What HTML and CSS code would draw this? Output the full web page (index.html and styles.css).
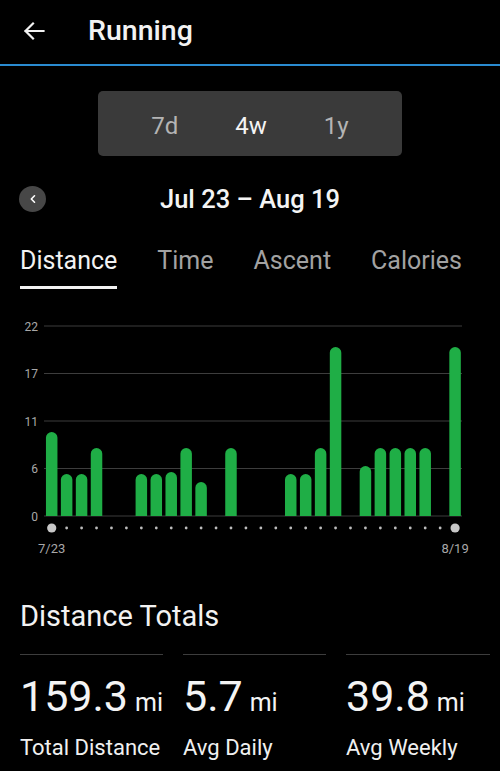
FILE: index.html
```html
<!DOCTYPE html>
<html lang="en">
<head>
<meta charset="utf-8">
<title>Running</title>
<link rel="stylesheet" href="styles.css">
</head>
<body>
<header class="topbar">
  <svg class="back" width="24" height="24" viewBox="0 0 24 24" aria-hidden="true">
    <path d="M21.5 12H3.5M11 4.5L3.5 12L11 19.5" fill="none" stroke="#f2f2f2" stroke-width="2.2" stroke-linecap="square"/>
  </svg>
  <h1 class="title">Running</h1>
</header>

<div class="range-wrap">
  <div class="range">
    <span class="range-item">7d</span>
    <span class="range-item active">4w</span>
    <span class="range-item">1y</span>
  </div>
</div>

<div class="daterow">
  <span class="prev">
    <svg width="10" height="10" viewBox="0 0 10 10" aria-hidden="true">
      <path d="M6.5 1.8L3.3 5L6.5 8.2" fill="none" stroke="#fff" stroke-width="1.6" stroke-linecap="round" stroke-linejoin="round"/>
    </svg>
  </span>
  <div class="dates">Jul 23 – Aug 19</div>
  <span></span>
</div>

<nav class="tabs">
  <span class="tab active">Distance</span>
  <span class="tab">Time</span>
  <span class="tab">Ascent</span>
  <span class="tab">Calories</span>
</nav>

<svg class="chart" width="500" height="260" viewBox="0 0 500 260">
  <defs>
    <clipPath id="plot"><rect x="0" y="0" width="500" height="216"/></clipPath>
  </defs>
  <g class="grid">
    <line x1="44" y1="26" x2="462" y2="26"/>
    <line x1="44" y1="73.5" x2="462" y2="73.5"/>
    <line x1="44" y1="121" x2="462" y2="121"/>
    <line x1="44" y1="168.5" x2="462" y2="168.5"/>
    <line x1="44" y1="216" x2="462" y2="216"/>
  </g>
  <g class="ylabels">
    <text x="38" y="30.5">22</text>
    <text x="38" y="78">17</text>
    <text x="38" y="125.5">11</text>
    <text x="38" y="173">6</text>
    <text x="38" y="220.5">0</text>
  </g>
  <g class="bars" clip-path="url(#plot)">
    <rect x="45.95" y="132" width="11.5" height="94" rx="5.75"/>
    <rect x="60.89" y="174" width="11.5" height="52" rx="5.75"/>
    <rect x="75.83" y="174" width="11.5" height="52" rx="5.75"/>
    <rect x="90.77" y="148" width="11.5" height="78" rx="5.75"/>
    <rect x="135.59" y="174" width="11.5" height="52" rx="5.75"/>
    <rect x="150.53" y="174" width="11.5" height="52" rx="5.75"/>
    <rect x="165.47" y="172" width="11.5" height="54" rx="5.75"/>
    <rect x="180.41" y="148" width="11.5" height="78" rx="5.75"/>
    <rect x="195.35" y="182" width="11.5" height="44" rx="5.75"/>
    <rect x="225.23" y="148" width="11.5" height="78" rx="5.75"/>
    <rect x="284.99" y="174" width="11.5" height="52" rx="5.75"/>
    <rect x="299.93" y="174" width="11.5" height="52" rx="5.75"/>
    <rect x="314.87" y="148" width="11.5" height="78" rx="5.75"/>
    <rect x="329.81" y="47" width="11.5" height="179" rx="5.75"/>
    <rect x="359.69" y="166" width="11.5" height="60" rx="5.75"/>
    <rect x="374.63" y="148" width="11.5" height="78" rx="5.75"/>
    <rect x="389.57" y="148" width="11.5" height="78" rx="5.75"/>
    <rect x="404.51" y="148" width="11.5" height="78" rx="5.75"/>
    <rect x="419.45" y="148" width="11.5" height="78" rx="5.75"/>
    <rect x="449.33" y="47" width="11.5" height="179" rx="5.75"/>
  </g>
  <g class="dots">
    <circle cx="51.7" cy="228" r="4.6" class="big"/>
    <circle cx="66.64" cy="228" r="1.4"/>
    <circle cx="81.58" cy="228" r="1.4"/>
    <circle cx="96.52" cy="228" r="1.4"/>
    <circle cx="111.46" cy="228" r="1.4"/>
    <circle cx="126.4" cy="228" r="1.4"/>
    <circle cx="141.34" cy="228" r="1.4"/>
    <circle cx="156.28" cy="228" r="1.4"/>
    <circle cx="171.22" cy="228" r="1.4"/>
    <circle cx="186.16" cy="228" r="1.4"/>
    <circle cx="201.1" cy="228" r="1.4"/>
    <circle cx="216.04" cy="228" r="1.4"/>
    <circle cx="230.98" cy="228" r="1.4"/>
    <circle cx="245.92" cy="228" r="1.4"/>
    <circle cx="260.86" cy="228" r="1.4"/>
    <circle cx="275.8" cy="228" r="1.4"/>
    <circle cx="290.74" cy="228" r="1.4"/>
    <circle cx="305.68" cy="228" r="1.4"/>
    <circle cx="320.62" cy="228" r="1.4"/>
    <circle cx="335.56" cy="228" r="1.4"/>
    <circle cx="350.5" cy="228" r="1.4"/>
    <circle cx="365.44" cy="228" r="1.4"/>
    <circle cx="380.38" cy="228" r="1.4"/>
    <circle cx="395.32" cy="228" r="1.4"/>
    <circle cx="410.26" cy="228" r="1.4"/>
    <circle cx="425.2" cy="228" r="1.4"/>
    <circle cx="440.14" cy="228" r="1.4"/>
    <circle cx="455.08" cy="228" r="4.6" class="big"/>
  </g>
  <g class="xlabels">
    <text x="51.7" y="253">7/23</text>
    <text x="455.08" y="253">8/19</text>
  </g>
</svg>

<section class="totals">
  <h2 class="totals-title">Distance Totals</h2>
  <div class="stats">
    <div class="stat">
      <div class="value">159.3<span class="unit">mi</span></div>
      <div class="label">Total Distance</div>
    </div>
    <div class="stat">
      <div class="value">5.7<span class="unit">mi</span></div>
      <div class="label">Avg Daily</div>
    </div>
    <div class="stat">
      <div class="value">39.8<span class="unit">mi</span></div>
      <div class="label">Avg Weekly</div>
    </div>
  </div>
</section>
</body>
</html>
```

FILE: styles.css
```css
* { box-sizing: border-box; }

html, body {
  margin: 0;
  padding: 0;
  background: #000;
}

body {
  width: 500px;
  height: 771px;
  overflow: hidden;
  font-family: Roboto, "Noto Sans", "Liberation Sans", sans-serif;
  color: #f2f2f2;
}

.topbar {
  height: 66px;
  display: flex;
  align-items: center;
  border-bottom: 2px solid #2a8bd0;
  padding-left: 22px;
  padding-bottom: 2px;
}

.back {
  display: block;
  flex: none;
}

.title {
  margin: 0 0 0 42px;
  font-size: 28.5px;
  font-weight: 500;
  line-height: 64px;
  color: #f2f2f2;
}

.range-wrap {
  padding-top: 25px;
  display: flex;
  justify-content: center;
}

.range {
  width: 304px;
  height: 65px;
  padding-top: 6px;
  background: #3a3a3a;
  border-radius: 5px;
  display: flex;
  justify-content: center;
  gap: 57px;
}

.range-item {
  font-size: 24px;
  line-height: 59px;
  color: #b4b4b4;
}

.range-item.active {
  color: #f4f4f4;
}

.daterow {
  margin-top: 19px;
  height: 48px;
  display: grid;
  grid-template-columns: 1fr auto 1fr;
  align-items: center;
}

.prev {
  margin-left: 19px;
  width: 27px;
  height: 26px;
  border-radius: 50%;
  background: #474747;
  display: flex;
  align-items: center;
  justify-content: center;
}

.prev svg { display: block; }

.dates {
  font-size: 25.5px;
  font-weight: 500;
  line-height: 48px;
  color: #f4f4f4;
}

.tabs {
  margin-top: 23px;
  display: flex;
  gap: 40px;
  padding-left: 20px;
}

.tab {
  font-size: 25px;
  line-height: 30px;
  padding-bottom: 10px;
  border-bottom: 3px solid transparent;
  color: #a2a2a2;
}

.tab.active {
  color: #f2f2f2;
  border-bottom-color: #f2f2f2;
}

.chart {
  display: block;
  margin-top: 11px;
}

.grid line {
  stroke: #3d3d3d;
  stroke-width: 1;
}

.ylabels text {
  font-family: Roboto, "Liberation Sans", sans-serif;
  font-size: 12px;
  fill: #a8a8a8;
  text-anchor: end;
}

.bars rect {
  fill: #1fae46;
}

.dots circle {
  fill: #bdbdbd;
}

.dots circle.big {
  fill: #c8c8c8;
}

.xlabels text {
  font-family: Roboto, "Liberation Sans", sans-serif;
  font-size: 13px;
  fill: #a8a8a8;
  text-anchor: middle;
}

.totals {
  padding: 0 10px 0 20px;
}

.totals-title {
  margin: 39px 0 0;
  font-size: 29px;
  font-weight: 400;
  line-height: 34px;
  color: #f2f2f2;
}

.stats {
  margin-top: 21px;
  display: grid;
  grid-template-columns: 143px 143px 144px;
  gap: 20px;
}

.stat {
  border-top: 1.5px solid #3d3d3d;
  padding-top: 17px;
}

.value {
  font-size: 43px;
  line-height: 48px;
  color: #f4f4f4;
  white-space: nowrap;
}

.unit {
  font-size: 25px;
  margin-left: 7px;
}

.label {
  margin-top: 8px;
  font-size: 22px;
  line-height: 26px;
  color: #f0f0f0;
  white-space: nowrap;
}
```
